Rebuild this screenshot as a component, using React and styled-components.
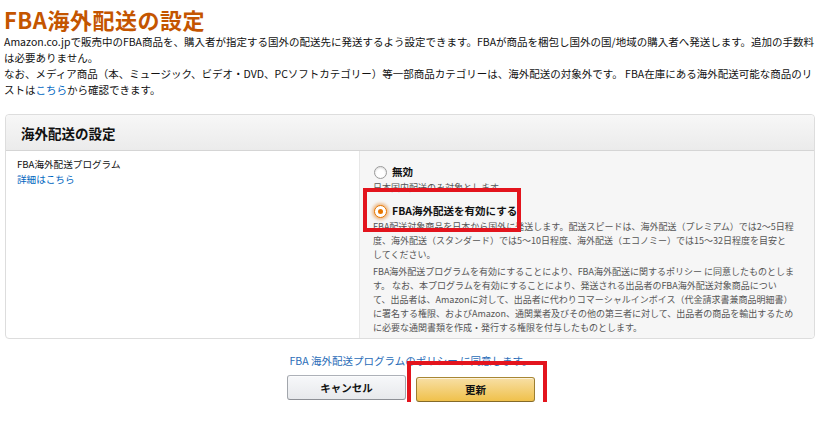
import React from 'react';
import styled, { createGlobalStyle } from 'styled-components';

const GlobalStyle = createGlobalStyle`
  body {
    margin: 0;
    background: #fff;
    font-family: "Noto Sans CJK JP", "Noto Sans", sans-serif;
    color: #111;
  }
`

const Page = styled.div`
  padding: 4px 4px 0 4px;
`

const Title = styled.h1`
  margin: 0;
  font-size: 22px;
  line-height: 30px;
  font-weight: 700;
  color: #c45500;
  letter-spacing: 0.5px;
`

const Intro = styled.p`
  margin: 0;
  font-size: 10.5px;
  line-height: 16px;
  color: #111;
`

const Link = styled.a`
  color: #0066c0;
  text-decoration: none;
  cursor: pointer;
`

const Panel = styled.div`
  margin: 16px 3px 0 1px;
  border: 1px solid #ddd;
  border-radius: 4px;
`

const PanelHeader = styled.div`
  height: 35px;
  display: flex;
  align-items: center;
  padding-left: 15px;
  background: linear-gradient(#f7f7f7, #ebebeb);
  border-bottom: 1px solid #d5d5d5;
  border-radius: 4px 4px 0 0;
  font-size: 13.5px;
  font-weight: 700;
  color: #111;
`

const Row = styled.div`
  display: grid;
  grid-template-columns: 353px 1fr;
`

const LabelCell = styled.div`
  padding: 6px 11px;
  font-size: 9.6px;
  line-height: 15px;
  color: #111;
`

const ValueCell = styled.div`
  position: relative;
  padding: 12px 20px 3px 13px;
  background: #f6f6f6;
  border-left: 1px solid #e7e7e7;
  border-radius: 0 0 4px 0;
  font-size: 9px;
  line-height: 14px;
  color: #555;
`

const Option = styled.label`
  position: relative;
  display: flex;
  align-items: center;
  gap: 5px;
  height: 18px;
  font-size: 10.5px;
  font-weight: 700;
  color: #111;
`

const Radio = styled.span`
  width: 13px;
  height: 13px;
  border-radius: 50%;
  box-sizing: border-box;
  background: #fff;
  border: 1px solid ${p => (p.checked ? '#e77600' : '#9a9a9a')};
  box-shadow: ${p => (p.checked ? '0 0 3px 2px rgba(228,121,17,0.45)' : 'inset 0 1px 2px rgba(0,0,0,0.15)')};
  display: flex;
  align-items: center;
  justify-content: center;
  margin-left: 1px;
  &::after {
    content: '';
    display: ${p => (p.checked ? 'block' : 'none')};
    width: 5px;
    height: 5px;
    border-radius: 50%;
    background: #e77600;
  }
`

const Note = styled.div`
  margin: 0 0 ${p => p.gap || 0}px 0;
`

const Highlight = styled.span`
  position: absolute;
  left: ${p => p.left}px;
  top: ${p => p.top}px;
  width: ${p => p.width}px;
  height: ${p => p.height}px;
  border: 4px solid #e3141d;
  box-sizing: border-box;
  pointer-events: none;
`

const Footer = styled.div`
  display: flex;
  flex-direction: column;
  align-items: center;
  padding-top: 14px;
`

const FooterLink = styled(Link)`
  font-size: 10.5px;
  line-height: 16px;
  color: #2a6db8;
`

const Buttons = styled.div`
  display: flex;
  gap: 10px;
  margin-top: 6px;
`

const ButtonWrap = styled.div`
  position: relative;
`

const Button = styled.button`
  width: 119px;
  height: 25px;
  border-radius: 3px;
  font-family: inherit;
  font-size: 10.5px;
  font-weight: 700;
  color: #111;
  cursor: pointer;
  border: 1px solid;
  border-color: ${p => (p.primary ? '#a88734 #9c7e31 #846a29' : '#adb1b8 #a2a6ac #8d9096')};
  background: ${p => (p.primary ? 'linear-gradient(#f7dfa5, #f0c14b)' : 'linear-gradient(#f7f8fa, #e7e9ec)')};
  box-shadow: 0 1px 0 rgba(255,255,255,0.6) inset;
`

export default function App() {
  return (
    <Page>
      <GlobalStyle />
      <Title>FBA海外配送の設定</Title>
      <Intro>
        Amazon.co.jpで販売中のFBA商品を、購入者が指定する国外の配送先に発送するよう設定できます。FBAが商品を梱包し国外の国/地域の購入者へ発送します。追加の手数料は必要ありません。
      </Intro>
      <Intro>
        なお、メディア商品（本、ミュージック、ビデオ・DVD、PCソフトカテゴリー）等一部商品カテゴリーは、海外配送の対象外です。 FBA在庫にある海外配送可能な商品のリストは<Link>こちら</Link>から確認できます。
      </Intro>

      <Panel>
        <PanelHeader>海外配送の設定</PanelHeader>
        <Row>
          <LabelCell>
            <div>FBA海外配送プログラム</div>
            <Link>詳細はこちら</Link>
          </LabelCell>
          <ValueCell>
            <Option>
              <Radio />
              無効
            </Option>
            <Note gap={7}>日本国内配送のみ対象とします。</Note>
            <Option>
              <Radio checked />
              FBA海外配送を有効にする
              <Highlight left={-10} top={-14} width={158} height={44} />
            </Option>
            <Note gap={3}>
              FBA配送対象商品を日本から国外に発送します。配送スピードは、海外配送（プレミアム）では2〜5日程度、海外配送（スタンダード）では5〜10日程度、海外配送（エコノミー）では15〜32日程度を目安としてください。
            </Note>
            <Note>
              FBA海外配送プログラムを有効にすることにより、FBA海外配送に関するポリシー に同意したものとします。 なお、本プログラムを有効にすることにより、発送される出品者のFBA海外配送対象商品について、出品者は、Amazonに対して、出品者に代わりコマーシャルインボイス（代金請求書兼商品明細書）に署名する権限、およびAmazon、通関業者及びその他の第三者に対して、出品者の商品を輸出するために必要な通関書類を作成・発行する権限を付与したものとします。
            </Note>
          </ValueCell>
        </Row>
      </Panel>

      <Footer>
        <FooterLink>FBA 海外配送プログラムのポリシー に同意します。</FooterLink>
        <Buttons>
          <Button>キャンセル</Button>
          <ButtonWrap>
            <Button primary>更新</Button>
            <Highlight left={-9} top={-14} width={140} height={50} />
          </ButtonWrap>
        </Buttons>
      </Footer>
    </Page>
  );
}
